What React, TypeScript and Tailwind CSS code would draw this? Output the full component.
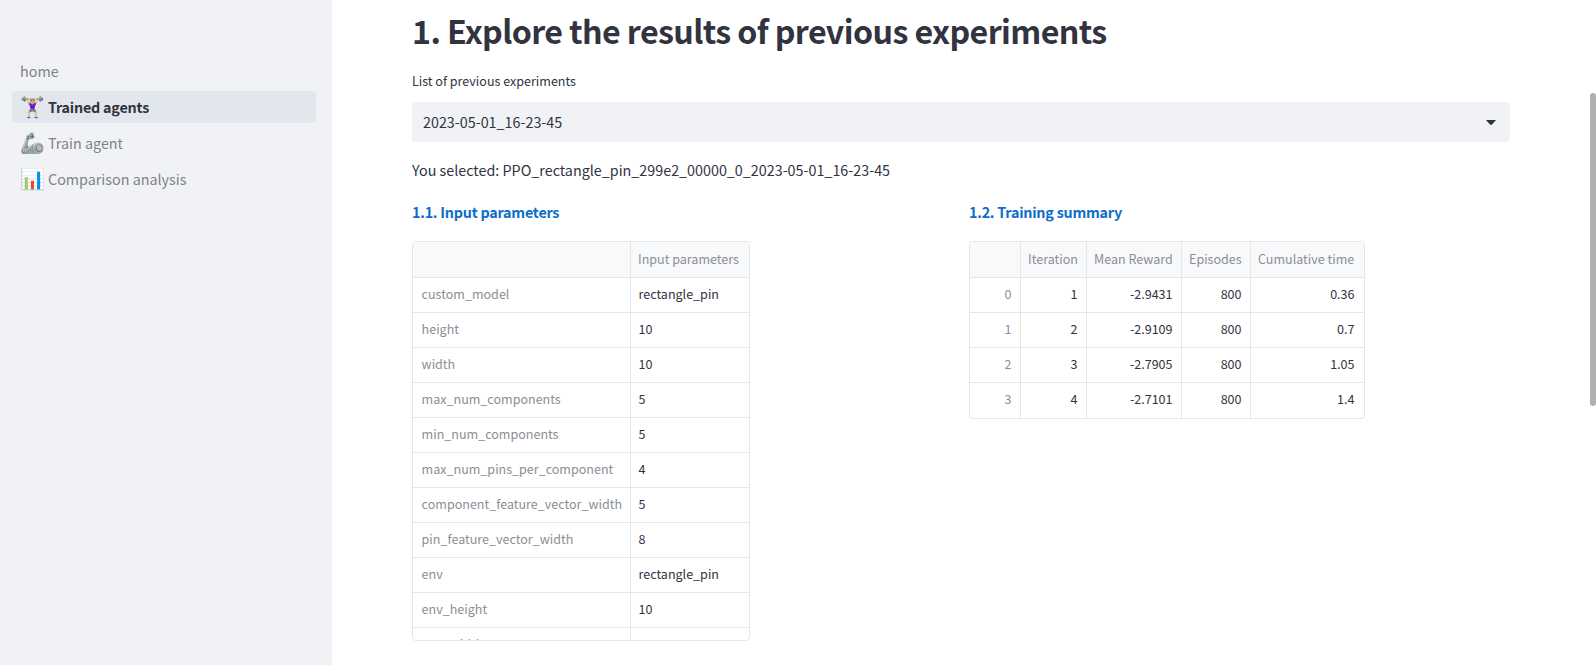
import React from "react";

const params: [string, string][] = [
  ["custom_model", "rectangle_pin"],
  ["height", "10"],
  ["width", "10"],
  ["max_num_components", "5"],
  ["min_num_components", "5"],
  ["max_num_pins_per_component", "4"],
  ["component_feature_vector_width", "5"],
  ["pin_feature_vector_width", "8"],
  ["env", "rectangle_pin"],
  ["env_height", "10"],
  ["env_width", "10"],
];

const summary = [
  ["0", "1", "-2.9431", "800", "0.36"],
  ["1", "2", "-2.9109", "800", "0.7"],
  ["2", "3", "-2.7905", "800", "1.05"],
  ["3", "4", "-2.7101", "800", "1.4"],
];

const headers = ["", "Iteration", "Mean Reward", "Episodes", "Cumulative time"];

function NavItem({ icon, label, active }: { icon?: string; label: string; active?: boolean }) {
  return (
    <a
      className={
        active
          ? "flex h-8 items-center rounded bg-[#e2e7ee] px-2 font-bold tracking-[-0.22px] text-[#31333f]"
          : "flex h-8 items-center rounded px-2 text-[#808289]"
      }
    >
      {icon && <span className="mr-1 w-6 whitespace-nowrap pb-0.5 text-[20px] font-normal tracking-normal">{icon}</span>}
      <span>{label}</span>
    </a>
  );
}

export default function App() {
  return (
    <div className="flex h-[665px] w-full overflow-hidden bg-white font-['Noto_Sans_CJK_SC',sans-serif] text-[14.33px] leading-6 text-[#31333f]">
      <aside className="w-[332px] shrink-0 bg-[#f0f2f6] px-3 pt-[55px]">
        <nav className="flex w-[304px] flex-col gap-1">
          <NavItem label="home" />
          <NavItem icon="🏋🏼‍♀️" label="Trained agents" active />
          <NavItem icon="🦾" label="Train agent" />
          <NavItem icon="📊" label="Comparison analysis" />
        </nav>
      </aside>
      <main className="flex grow flex-col pl-20">
        <div className="flex w-[1098px] flex-col">
          <h1 className="pt-[9px] text-[32.2px] font-bold leading-[43px] tracking-[-0.61px]">
            1. Explore the results of previous experiments
          </h1>
          <label className="mt-[19px] text-[12.54px] leading-5">List of previous experiments</label>
          <div className="mt-[11px] flex h-10 items-center justify-between rounded bg-[#f0f2f6] pl-[11px] pr-[14px]">
            <span>2023-05-01_16-23-45</span>
            <svg width="10" height="5" viewBox="0 0 10 5" className="text-[#31333f]">
              <path d="M0 0h10L6 4.5q-1 .8-2 0z" fill="currentColor" />
            </svg>
          </div>
          <p className="mt-4">You selected: PPO_rectangle_pin_299e2_00000_0_2023-05-01_16-23-45</p>
          <div className="mt-[18px] grid grid-cols-2 gap-4">
            <section>
              <h2 className="font-bold tracking-[-0.23px] text-[#0c6dcb]">1.1. Input parameters</h2>
              <div className="mt-[17px] h-[400px] w-[338px] overflow-hidden rounded border border-[#e6e6e8] text-[12.54px]">
                <div className="flex h-9 border-b border-[#e6e6e8] bg-[#f8f9fb] leading-[33px] text-[#8c8e95]">
                  <div className="w-[218px] border-r border-[#e6e6e8]" />
                  <div className="pl-[7px]">Input parameters</div>
                </div>
                {params.map(([k, v]) => (
                  <div key={k} className="flex h-[35px] border-b border-[#e6e6e8] leading-8">
                    <div className="w-[218px] border-r border-[#e6e6e8] pl-[8.6px] text-[#8c8e95]">{k}</div>
                    <div className="pl-[7.5px]">{v}</div>
                  </div>
                ))}
              </div>
            </section>
            <section>
              <h2 className="font-bold tracking-[-0.23px] text-[#0c6dcb]">1.2. Training summary</h2>
              <div className="mt-[17px] h-[178px] w-[396px] overflow-hidden rounded border border-[#e6e6e8] text-[12.54px]">
                <div className="grid h-9 grid-cols-[51px_66px_95px_69px_113px] border-b border-[#e6e6e8] bg-[#f8f9fb] leading-[33px] text-[#8c8e95]">
                  {headers.map((h) => (
                    <div key={h} className="whitespace-nowrap border-r border-[#e6e6e8] pl-[7px] last:border-r-0">{h}</div>
                  ))}
                </div>
                {summary.map((row) => (
                  <div
                    key={row[0]}
                    className="grid h-[35px] grid-cols-[51px_66px_95px_69px_113px] border-b border-[#e6e6e8] text-right leading-8 last:border-b-0"
                  >
                    {row.map((c, i) => (
                      <div
                        key={i}
                        className="border-r border-[#e6e6e8] pr-[8.5px] first:text-[#8c8e95] last:border-r-0 last:pr-[9.5px]"
                      >
                        {c}
                      </div>
                    ))}
                  </div>
                ))}
              </div>
            </section>
          </div>
        </div>
      </main>
      <div className="w-1.5 shrink-0 pt-[93px]">
        <div className="h-[313px] rounded-full bg-[#b0b0b3]" />
      </div>
    </div>
  );
}
